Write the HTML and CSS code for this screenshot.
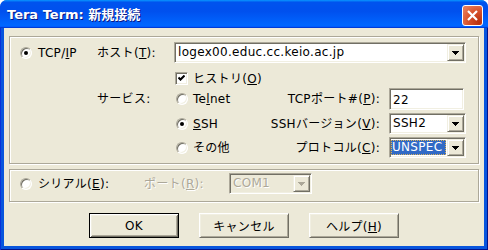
FILE: index.html
```html
<!DOCTYPE html>
<html lang="ja">
<head>
    <meta charset="UTF-8">
    <title>Tera Term: 新規接続</title>
    <link rel="stylesheet" href="styles.css">
</head>
<body>
    <div class="window">
        <div class="titlebar">
            <span class="title">Tera Term: 新規接続</span>
            <span class="close">
                <svg width="19" height="19" viewBox="0 0 19 19">
                    <path d="M5 5L14 14M14 5L5 14" stroke="#fff" stroke-width="2.2" fill="none"/>
                </svg>
            </span>
        </div>
        <div class="frame">
            <div class="client">
                <!-- TCP/IP group -->
                <div class="group tcp">
                    <div class="cell r1 c1 opt"><span class="radio on"></span><span>TCP/<u>I</u>P</span></div>
                    <div class="cell r1 c2"><span>ホスト(<u>T</u>):</span></div>
                    <div class="combo r1 host">
                        <span class="value">logex00.educ.cc.keio.ac.jp</span>
                        <span class="arrow"><svg width="7" height="4"><polygon points="0,0 7,0 7,1 6,1 6,2 5,2 5,3 4,3 4,4 3,4 3,3 2,3 2,2 1,2 1,1 0,1"/></svg></span>
                    </div>

                    <div class="cell r2 check-cell opt"><span class="checkbox"><svg width="7" height="7"><polyline points="0.5,2.5 2.5,4.5 6.5,0.5" fill="none" stroke="#000" stroke-width="2"/></svg></span><span>ヒストリ(<u>O</u>)</span></div>

                    <div class="cell r3 c2"><span>サービス:</span></div>
                    <div class="cell r3 c3 opt"><span class="radio"></span><span>Te<u>l</u>net</span></div>
                    <div class="cell r3 c4 right"><span>TCPポート#(<u>P</u>):</span></div>
                    <div class="edit r3 c5">22</div>

                    <div class="cell r4 c3 opt low"><span class="radio on"></span><span><u>S</u>SH</span></div>
                    <div class="cell r4 c4 right low"><span>SSHバージョン(<u>V</u>):</span></div>
                    <div class="combo r4 c5 low">
                        <span class="value">SSH2</span>
                        <span class="arrow"><svg width="7" height="4"><polygon points="0,0 7,0 7,1 6,1 6,2 5,2 5,3 4,3 4,4 3,4 3,3 2,3 2,2 1,2 1,1 0,1"/></svg></span>
                    </div>

                    <div class="cell r5 c3 opt low"><span class="radio"></span><span>その他</span></div>
                    <div class="cell r5 c4 right low"><span>プロトコル(<u>C</u>):</span></div>
                    <div class="combo r5 c5 low">
                        <span class="value selected">UNSPEC</span>
                        <span class="arrow"><svg width="7" height="4"><polygon points="0,0 7,0 7,1 6,1 6,2 5,2 5,3 4,3 4,4 3,4 3,3 2,3 2,2 1,2 1,1 0,1"/></svg></span>
                    </div>
                </div>

                <!-- serial group -->
                <div class="group serial">
                    <div class="cell serial-opt opt"><span class="radio"></span><span>シリアル(<u>E</u>):</span></div>
                    <div class="cell port-label disabled"><span>ポート(<u>R</u>):</span></div>
                    <div class="combo com disabled">
                        <span class="value">COM1</span>
                        <span class="arrow"><svg width="7" height="4"><polygon points="0,0 7,0 7,1 6,1 6,2 5,2 5,3 4,3 4,4 3,4 3,3 2,3 2,2 1,2 1,1 0,1"/></svg></span>
                    </div>
                </div>

                <div class="buttons">
                    <button class="btn default">OK</button>
                    <button class="btn">キャンセル</button>
                    <button class="btn">ヘルプ(<u>H</u>)</button>
                </div>
            </div>
        </div>
    </div>
</body>
</html>
```

FILE: styles.css
```css
* {
    margin: 0;
    padding: 0;
    box-sizing: border-box;
}

body {
    background: #fff;
    font-family: "DejaVu Sans", "Noto Sans CJK JP", sans-serif;
    font-size: 12px;
    letter-spacing: 0.3px;
    color: #000;
}

u {
    text-decoration: underline;
    text-underline-offset: 1px;
}

.window {
    width: 488px;
    height: 250px;
    display: flex;
    flex-direction: column;
    border-radius: 7px 7px 0 0;
    overflow: hidden;
    background: #0855dd;
}

/* title bar */
.titlebar {
    height: 28px;
    display: flex;
    align-items: flex-start;
    justify-content: space-between;
    padding-left: 7px;
    background: linear-gradient(180deg, #0997ff, #0053ee 8%, #0050ee 40%, #0066ff 88%, #0066ff 93%, #005bff 95%, #003dd7 96%, #003dd7);
}

.title {
    margin-top: 7px;
    color: #fff;
    font-weight: bold;
    font-size: 13px;
    letter-spacing: 0;
    line-height: 15px;
    text-shadow: 1px 1px #0a1883;
}

.close {
    width: 21px;
    height: 21px;
    margin: 5px 5px 0 0;
    border: 1px solid #fff;
    border-radius: 3px;
    background: radial-gradient(circle at 85% 85%, #b8300f 0%, #d8532d 50%, #e77a57 85%);
    display: flex;
    align-items: center;
    justify-content: center;
}

/* window frame around the client */
.frame {
    flex: 1;
    padding: 0 4px 4px;
    background: #0855dd;
    box-shadow: inset 1px 0 #0831d9, inset -1px -1px #00138c;
    display: flex;
}

.client {
    flex: 1;
    background: #ece9d8;
    padding: 8px 5px 0;
}

/* etched group boxes */
.group {
    border: 1px solid #aca899;
    box-shadow: 1px 1px 0 #fff, inset 1px 1px 0 #fff;
}

.tcp {
    height: 128px;
    padding: 5px 0 0 10px;
    display: grid;
    grid-template-columns: 77px 77px 106px 109px 77px;
    grid-template-rows: 21px 25px 22px 24px 24px;
}

.cell {
    display: flex;
    align-items: center;
    white-space: nowrap;
    line-height: 14px;
}

.r1 { grid-row: 1; }
.r2 { grid-row: 2; }
.r3 { grid-row: 3; }
.r4 { grid-row: 4; }
.r5 { grid-row: 5; }
.c1 { grid-column: 1; }
.c2 { grid-column: 2; }
.c3 { grid-column: 3; padding-left: 2px; }
.c4 { grid-column: 4; }
.c5 { grid-column: 5; }

.host {
    grid-column: 3 / 6;
}

.check-cell {
    grid-column: 3 / 6;
    align-items: flex-start;
    padding: 9px 0 0 1px;
}

.right {
    justify-content: flex-end;
    padding-right: 9px;
}

.low {
    align-self: end;
    height: 21px;
}

.opt {
    gap: 6px;
}

.c3.opt,
.check-cell {
    gap: 5px;
}

/* classic radio */
.radio {
    width: 12px;
    height: 12px;
    flex: none;
    border-radius: 50%;
    background: #fff;
    border: 1px solid;
    border-color: #aca899 #fff #fff #aca899;
    box-shadow: inset 1px 1px 0 #716f64, inset -1px -1px 0 #f1efe2;
    display: flex;
    align-items: center;
    justify-content: center;
}

.radio.on::after {
    content: "";
    width: 4px;
    height: 4px;
    border-radius: 50%;
    background: #000;
}

/* classic checkbox */
.checkbox {
    width: 13px;
    height: 13px;
    flex: none;
    background: #fff;
    border: 1px solid;
    border-color: #aca899 #fff #fff #aca899;
    box-shadow: inset 1px 1px 0 #716f64, inset -1px -1px 0 #f1efe2;
    display: flex;
    align-items: center;
    justify-content: center;
}

/* edits and combos */
.edit,
.combo {
    background: #fff;
    border: 1px solid;
    border-color: #aca899 #fff #fff #aca899;
    box-shadow: inset 1px 1px 0 #716f64, inset -1px -1px 0 #f1efe2;
    padding: 1px;
    white-space: nowrap;
}

.edit {
    width: 75px;
    height: 22px;
    padding-left: 3px;
    line-height: 20px;
}

.combo {
    height: 21px;
    display: flex;
}

.combo .value {
    flex: 1;
    overflow: hidden;
    padding-left: 2px;
    line-height: 17px;
}

.combo .value.selected {
    margin: 1px 1px 1px 0;
    padding-left: 1px;
    line-height: 15px;
    color: #fff;
    background: #316ac5;
    outline: 1px dotted #d9b25c;
    outline-offset: -1px;
}

.combo .arrow {
    width: 17px;
    flex: none;
    background: #ece9d8;
    border: 1px solid;
    border-color: #f1efe2 #716f64 #716f64 #f1efe2;
    box-shadow: inset 1px 1px 0 #fff, inset -1px -1px 0 #aca899;
    display: flex;
    align-items: center;
    justify-content: center;
}

/* serial group */
.serial {
    height: 33px;
    margin-top: 5px;
    padding: 3px 0 0 10px;
    display: flex;
    align-items: flex-start;
}

.serial .cell {
    height: 21px;
}

.serial-opt {
    width: 124px;
}

.port-label {
    width: 85px;
}

.disabled {
    color: #aca899;
    text-shadow: 1px 1px 0 #fff;
}

.combo.com {
    width: 83px;
    background: #ece9d8;
}

.combo.disabled polygon {
    fill: #aca899;
}

/* dialog buttons */
.buttons {
    margin-top: 11px;
    display: flex;
    justify-content: center;
    gap: 20px;
}

.btn {
    width: 90px;
    height: 25px;
    font-family: inherit;
    font-size: 12px;
    letter-spacing: 0.3px;
    color: #000;
    background: #ece9d8;
    border: 1px solid;
    border-color: #fff #716f64 #716f64 #fff;
    box-shadow: inset 1px 1px 0 #f1efe2, inset -1px -1px 0 #aca899;
}

.btn.default {
    border: 1px solid #000;
    box-shadow: inset 1px 1px 0 #fff, inset -1px -1px 0 #716f64, inset 2px 2px 0 #f1efe2, inset -2px -2px 0 #aca899;
}
```
